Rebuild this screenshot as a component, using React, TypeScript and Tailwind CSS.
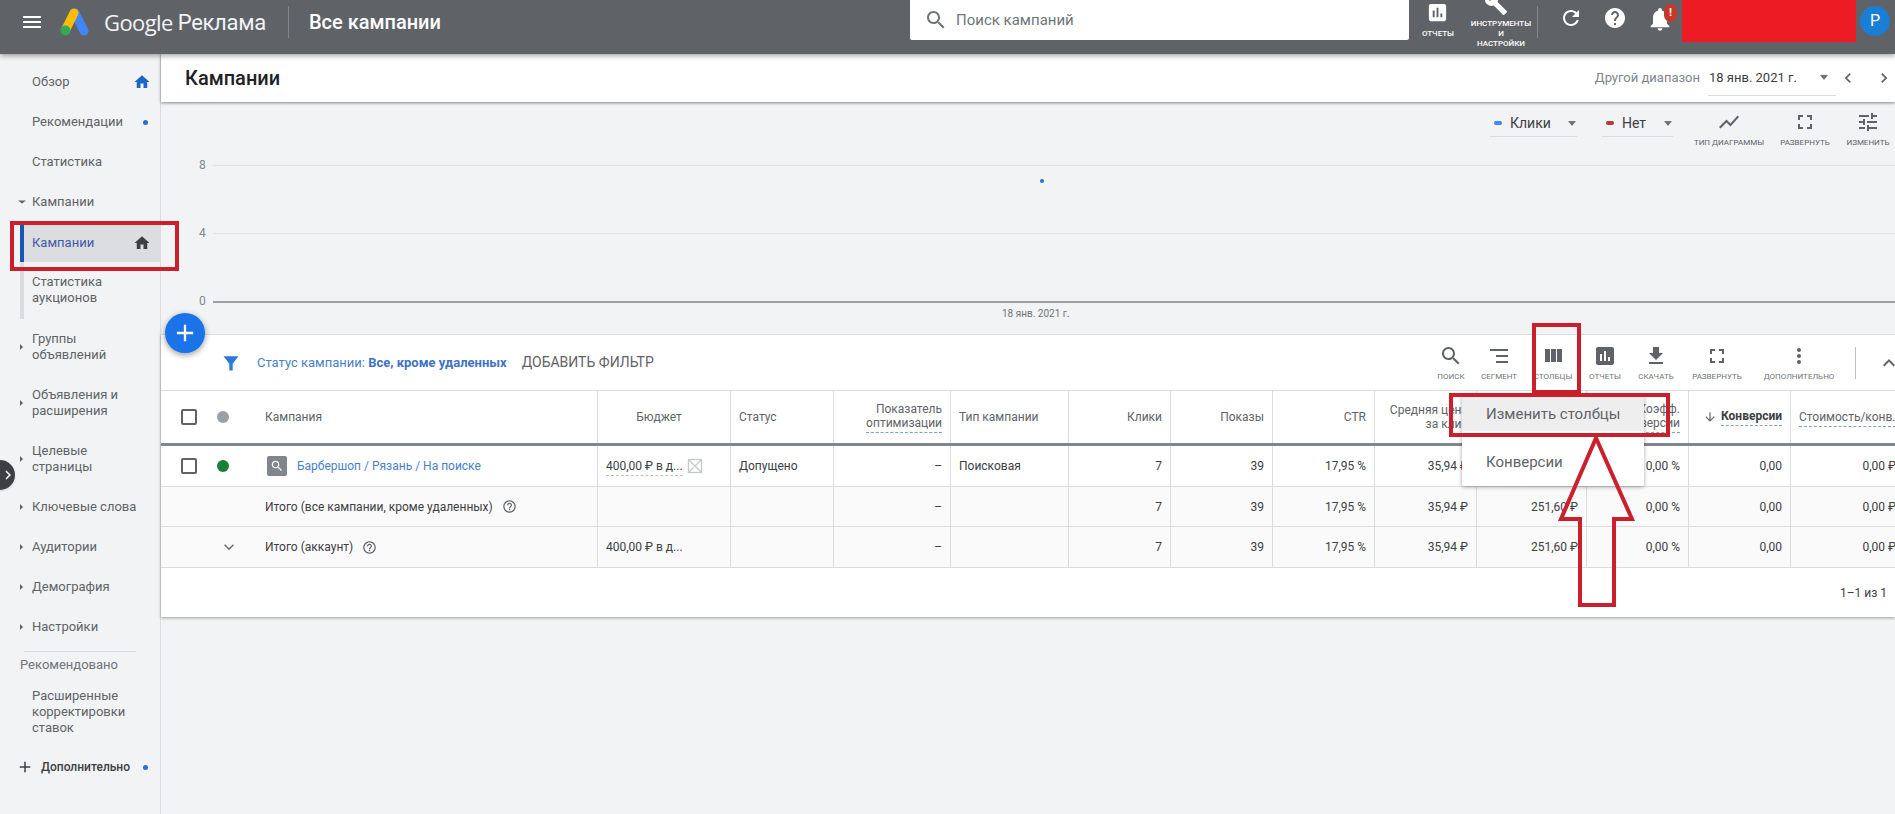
import React from 'react';

type IconProps = { d: string; className?: string };

const Icon = ({ d, className }: IconProps) => (
  <svg viewBox="0 0 24 24" fill="currentColor" className={className}>
    <path d={d} />
  </svg>
);

const paths = {
  menu: 'M3 18h18v-2H3v2zm0-5h18v-2H3v2zm0-7v2h18V6H3z',
  search:
    'M15.5 14h-.79l-.28-.27C15.41 12.59 16 11.11 16 9.5 16 5.91 13.09 3 9.5 3S3 5.91 3 9.5 5.91 16 9.5 16c1.61 0 3.09-.59 4.23-1.57l.27.28v.79l5 4.99L20.49 19l-4.99-5zm-6 0C7.01 14 5 11.99 5 9.5S7.01 5 9.5 5 14 7.01 14 9.5 11.99 14 9.5 14z',
  report:
    'M19 3H5c-1.1 0-2 .9-2 2v14c0 1.1.9 2 2 2h14c1.1 0 2-.9 2-2V5c0-1.1-.9-2-2-2zM9 17H7v-7h2v7zm4 0h-2V7h2v10zm4 0h-2v-4h2v4z',
  wrench:
    'M22.7 19l-9.1-9.1c.9-2.3.4-5-1.5-6.9-2-2-5-2.4-7.4-1.3L9 6 6 9 1.6 4.7C.4 7.1.9 10.1 2.9 12.1c1.9 1.9 4.6 2.4 6.9 1.5l9.1 9.1c.4.4 1 .4 1.4 0l2.3-2.3c.5-.4.5-1.1.1-1.4z',
  refresh:
    'M17.65 6.35C16.2 4.9 14.21 4 12 4c-4.42 0-7.99 3.58-7.99 8s3.57 8 7.99 8c3.73 0 6.84-2.55 7.73-6h-2.08c-.82 2.33-3.04 4-5.65 4-3.31 0-6-2.69-6-6s2.69-6 6-6c1.66 0 3.14.69 4.22 1.78L13 11h7V4l-2.35 2.35z',
  help: 'M12 2C6.48 2 2 6.48 2 12s4.48 10 10 10 10-4.48 10-10S17.52 2 12 2zm1 17h-2v-2h2v2zm2.07-7.75l-.9.92C13.45 12.9 13 13.5 13 15h-2v-.5c0-1.1.45-2.1 1.17-2.83l1.24-1.26c.37-.36.59-.86.59-1.41 0-1.1-.9-2-2-2s-2 .9-2 2H8c0-2.21 1.79-4 4-4s4 1.79 4 4c0 .88-.36 1.68-.93 2.25z',
  helpOutline:
    'M11 18h2v-2h-2v2zm1-16C6.48 2 2 6.48 2 12s4.48 10 10 10 10-4.48 10-10S17.52 2 12 2zm0 18c-4.41 0-8-3.59-8-8s3.59-8 8-8 8 3.59 8 8-3.59 8-8 8zm0-14c-2.21 0-4 1.79-4 4h2c0-1.1.9-2 2-2s2 .9 2 2c0 2-3 1.75-3 5h2c0-2.25 3-2.5 3-5 0-2.21-1.79-4-4-4z',
  bell: 'M12 22c1.1 0 2-.9 2-2h-4c0 1.1.89 2 2 2zm6-6v-5c0-3.07-1.64-5.64-4.5-6.32V4c0-.83-.67-1.5-1.5-1.5s-1.5.67-1.5 1.5v.68C7.63 5.36 6 7.92 6 11v5l-2 2v1h16v-1l-2-2z',
  home: 'M10 20v-6h4v6h5v-8h3L12 3 2 12h3v8z',
  fullscreen: 'M7 14H5v5h5v-2H7v-3zm-2-4h2V7h3V5H5v5zm12 7h-3v2h5v-5h-2v3zM14 5v2h3v3h2V5h-5z',
  tune: 'M3 17v2h6v-2H3zM3 5v2h10V5H3zm10 16v-2h8v-2h-8v-2h-2v6h2zM7 9v2H3v2h4v2h2V9H7zm14 4v-2H11v2h10zm-6-4h2V7h4V5h-4V3h-2v6z',
  chart: 'M3.5 18.49l6-6.01 4 4L22 6.92l-1.41-1.41-7.09 7.97-4-4L2 16.99z',
  segment: 'M3 5h18v2H3V5zm6 6h12v2H9v-2zm0 6h12v2H9v-2z',
  columns: 'M10 18h5V5h-5v13zm-6 0h5V5H4v13zM16 5v13h5V5h-5z',
  download: 'M19 9h-4V3H9v6H5l7 7 7-7zM5 18v2h14v-2H5z',
  more: 'M12 8c1.1 0 2-.9 2-2s-.9-2-2-2-2 .9-2 2 .9 2 2 2zm0 2c-1.1 0-2 .9-2 2s.9 2 2 2 2-.9 2-2-.9-2-2-2zm0 6c-1.1 0-2 .9-2 2s.9 2 2 2 2-.9 2-2-.9-2-2-2z',
  arrowDown: 'M20 12l-1.41-1.41L13 16.17V4h-2v12.17l-5.58-5.59L4 12l8 8 8-8z',
  chevronDown: 'M7.41 8.59L12 13.17l4.59-4.58L18 10l-6 6-6-6z',
  chevronUp: 'M7.41 15.41L12 10.83l4.59 4.58L18 14l-6-6-6 6z',
  chevronLeft: 'M15.41 7.41L14 6l-6 6 6 6 1.41-1.41L10.83 12z',
  chevronRight: 'M10 6L8.59 7.41 13.17 12l-4.58 4.59L10 18l6-6z',
  filter: 'M3 4h18l-7 9v8h-4v-8z',
  plus: 'M19 13h-6v6h-2v-6H5v-2h6V5h2v6h6v2z',
};

const Caret = ({ className }: { className: string }) => (
  <span className={`inline-block ${className}`} />
);

const SideItem = ({
  children,
  tall,
  arrow,
  right,
}: {
  children: React.ReactNode;
  tall?: boolean;
  arrow?: 'right' | 'down';
  right?: React.ReactNode;
}) => (
  <div className={`relative flex items-center pl-8 pr-[9px] text-[13px] leading-4 text-[#5f6368] ${tall ? 'h-14' : 'h-10'}`}>
    {arrow === 'right' && (
      <Caret className="absolute left-[20px] top-1/2 -translate-y-1/2 border-y-[3px] border-l-[3px] border-y-transparent border-l-[#5f6368]" />
    )}
    {arrow === 'down' && (
      <Caret className="absolute left-[18px] top-1/2 -translate-y-1/2 border-x-[4px] border-t-[3px] border-x-transparent border-t-[#5f6368]" />
    )}
    <span className="flex-1">{children}</span>
    {right}
  </div>
);

const Sidebar = () => (
  <aside className="w-[161px] shrink-0 border-r border-[#dadce0] bg-[#f1f3f4] pt-2">
    <SideItem right={<Icon d={paths.home} className="h-[18px] w-[18px] text-[#1a66c9]" />}>Обзор</SideItem>
    <SideItem right={<span className="mr-[3px] h-[5px] w-[5px] rounded-full bg-[#2a6fd0]" />}>Рекомендации</SideItem>
    <SideItem>Статистика</SideItem>
    <SideItem arrow="down">Кампании</SideItem>
    <div className="ml-5 mt-[2px] flex h-[38px] items-center border-l-4 border-[#1a56b8] bg-[#dcdde0] pl-2 pr-[9px] text-[13px] text-[#3f5ba9]">
      <span className="flex-1">Кампании</span>
      <Icon d={paths.home} className="h-[18px] w-[18px] text-[#3c4043]" />
    </div>
    <div className="ml-5 flex h-[57px] items-center border-l-4 border-[#dadce0] pb-[1px] pl-2 text-[13px] leading-4 text-[#5f6368]">
      <span>
        Статистика
        <br />
        аукционов
      </span>
    </div>
    <SideItem tall arrow="right">
      Группы
      <br />
      объявлений
    </SideItem>
    <SideItem tall arrow="right">
      Объявления и
      <br />
      расширения
    </SideItem>
    <SideItem tall arrow="right">
      Целевые
      <br />
      страницы
    </SideItem>
    <SideItem arrow="right">Ключевые слова</SideItem>
    <SideItem arrow="right">Аудитории</SideItem>
    <SideItem arrow="right">Демография</SideItem>
    <SideItem arrow="right">Настройки</SideItem>
    <div className="ml-6 mr-6 mt-1 h-px w-[112px] bg-[#dadce0]" />
    <div className="flex h-[26px] items-center pl-5 text-[13px] text-[#70757a]">Рекомендовано</div>
    <div className="mt-[2px] flex h-16 items-center pl-8 text-[13px] leading-4 text-[#5f6368]">
      <span>
        Расширенные
        <br />
        корректировки
        <br />
        ставок
      </span>
    </div>
    <div className="mt-[3px] flex h-10 items-center pl-4 pr-[9px] text-[12px] font-medium text-[#3c4043]">
      <Icon d={paths.plus} className="h-[18px] w-[18px] text-[#3c4043]" />
      <span className="ml-[7px] flex-1">Дополнительно</span>
      <span className="mr-[3px] h-[5px] w-[5px] rounded-full bg-[#2a6fd0]" />
    </div>
  </aside>
);

const TopBar = () => (
  <header className="relative z-20 flex h-[54px] shrink-0 items-start bg-[#5f6368] text-white shadow-[0_2px_5px_rgba(0,0,0,0.35)]">
    <div className="flex h-[44px] items-center pl-[20px]">
      <Icon d={paths.menu} className="h-6 w-6" />
      <svg viewBox="0 0 30 28" className="ml-[16px] h-[28px] w-[30px]">
        <line x1="15" y1="5" x2="24" y2="23" stroke="#4285f4" strokeWidth="9" strokeLinecap="round" />
        <line x1="14" y1="5" x2="6" y2="21" stroke="#fbbc04" strokeWidth="9" strokeLinecap="round" />
        <circle cx="5.5" cy="22.5" r="5" fill="#34a853" />
      </svg>
      <span className="ml-[14px] font-['Open_Sans',sans-serif] text-[22px] tracking-[-0.6px] text-[#f1f3f4]">Google</span>
      <span className="ml-[5px] text-[22px] tracking-[-0.3px] text-[#f1f3f4]">Реклама</span>
      <div className="ml-[22px] h-8 w-px bg-[#80868b]" />
      <span className="ml-[20px] text-[20px] font-medium">Все кампании</span>
    </div>
    <div className="ml-[469px] flex h-10 w-[499px] items-center rounded-b-[2px] bg-white pl-[14px] text-[#70757a]">
      <Icon d={paths.search} className="h-6 w-6" />
      <span className="ml-[8px] text-[15px]">Поиск кампаний</span>
    </div>
    <div className="ml-[18px] flex w-[22px] flex-col items-center">
      <Icon d={paths.report} className="mt-[1px] h-[23px] w-[23px]" />
      <span className="mt-[5px] whitespace-nowrap text-[8px] font-medium leading-[10px]">ОТЧЕТЫ</span>
    </div>
    <div className="relative ml-[21px] flex w-[62px] flex-col items-center overflow-hidden pt-[19px] text-center text-[8px] font-medium leading-[10px]">
      <Icon d={paths.wrench} className="absolute -top-[8px] left-[14px] h-[24px] w-[24px]" />
      <span>ИНСТРУМЕНТЫ</span>
      <span>И</span>
      <span>НАСТРОЙКИ</span>
    </div>
    <div className="ml-[5px] mt-[6px] h-8 w-px bg-[#80868b]" />
    <Icon d={paths.refresh} className="ml-[21px] mt-[6px] h-6 w-6" />
    <Icon d={paths.help} className="ml-[20px] mt-[6px] h-6 w-6" />
    <div className="relative ml-[19px] mt-[5px] h-7 w-7">
      <Icon d={paths.bell} className="h-7 w-7" />
      <span className="absolute -right-[3px] -top-[1px] flex h-[18px] w-[13px] items-center justify-center rounded-full bg-[#c5392c] text-[11px] font-bold">!</span>
    </div>
    <div className="ml-[8px] h-[42px] w-[174px] bg-[#ed1c24]" />
    <div className="ml-[4px] mt-[6px] flex h-[30px] w-[30px] shrink-0 items-center justify-center rounded-full bg-[#1a7fd4] text-[16px]">P</div>
  </header>
);

const PageTitle = () => (
  <div className="relative z-10 flex h-12 shrink-0 items-center bg-white pl-6 pr-[1px] shadow-[0_1px_3px_rgba(0,0,0,0.45)]">
    <h1 className="flex-1 text-[20px] font-medium leading-none text-[#202124]">Кампании</h1>
    <span className="text-[13px] text-[#80868b]">Другой диапазон</span>
    <div className="ml-[8px] flex h-[36px] w-[128px] items-center justify-between border-b border-[#dadce0] pl-[1px] pr-[8px] text-[13px] text-[#3c4043]">
      <span>18 янв. 2021 г.</span>
      <Caret className="border-x-[4px] border-t-[5px] border-x-transparent border-t-[#70757a]" />
    </div>
    <Icon d={paths.chevronLeft} className="ml-[2px] h-5 w-5 text-[#5f6368]" />
    <Icon d={paths.chevronRight} className="ml-4 h-5 w-5 text-[#5f6368]" />
  </div>
);

const LegendSelect = ({ color, label, width }: { color: string; label: string; width: string }) => (
  <div className={`flex h-[27px] items-center border-b border-[#dadce0] pl-[4px] text-[14px] text-[#3c4043] ${width}`}>
    <span className={`h-[4px] w-[8px] rounded-full ${color}`} />
    <span className="ml-[8px] flex-1">{label}</span>
    <Caret className="mr-[1px] border-x-[4px] border-t-[5px] border-x-transparent border-t-[#70757a]" />
  </div>
);

const ChartAction = ({ d, label, width }: { d: string; label: string; width: string }) => (
  <div className={`flex flex-col items-center ${width}`}>
    <Icon d={d} className="h-6 w-6 text-[#5f6368]" />
    <span className="mt-[4px] whitespace-nowrap text-[8px] leading-[10px] text-[#5f6368]">{label}</span>
  </div>
);

const Chart = () => (
  <section className="relative h-[232px] shrink-0 bg-[#f1f3f4]">
    <div className="flex items-start justify-end pr-[5px] pt-[8px]">
      <LegendSelect color="bg-[#4285f4]" label="Клики" width="w-[87px]" />
      <div className="w-[25px]" />
      <LegendSelect color="bg-[#b23a30]" label="Нет" width="w-[71px]" />
      <ChartAction d={paths.chart} label="ТИП ДИАГРАММЫ" width="ml-[21px] w-[70px]" />
      <ChartAction d={paths.fullscreen} label="РАЗВЕРНУТЬ" width="ml-[17px] w-[48px]" />
      <ChartAction d={paths.tune} label="ИЗМЕНИТЬ" width="ml-[17px] w-[44px]" />
    </div>
    <div className="ml-[38px] mt-[17px]">
      <div className="flex h-[68px] items-start text-[12px] leading-none text-[#80868b]">
        <span className="w-[14px] -translate-y-[6px]">8</span>
        <div className="h-px flex-1 bg-[#e0e2e4]" />
      </div>
      <div className="flex h-[68px] items-start text-[12px] leading-none text-[#80868b]">
        <span className="w-[14px] -translate-y-[6px]">4</span>
        <div className="h-px flex-1 bg-[#e0e2e4]" />
      </div>
      <div className="flex h-[2px] items-start text-[12px] leading-none text-[#80868b]">
        <span className="w-[14px] -translate-y-[6px]">0</span>
        <div className="h-[2px] flex-1 bg-[#9aa0a6]" />
      </div>
      <div className="mt-[3px] pl-[803px] text-[10px] text-[#70757a]">18 янв. 2021 г.</div>
    </div>
    {/* единственная точка на графике */}
    <span className="absolute left-[879px] top-[77px] h-[4px] w-[4px] rounded-full bg-[#2a6fd0]" />
  </section>
);

const ToolAction = ({ d, label, width }: { d: string; label: string; width: string }) => (
  <div className={`flex shrink-0 flex-col items-center ${width}`}>
    <Icon d={d} className="h-[24px] w-[24px] text-[#5f6368]" />
    <span className="mt-[4px] whitespace-nowrap text-[8px] leading-[10px] text-[#70757a]">{label}</span>
  </div>
);

const Toolbar = () => (
  <div className="relative flex h-[56px] items-center border-b border-[#dadce0] pl-[60px] text-[13px]">
    <Icon d={paths.filter} className="h-[20px] w-[20px] text-[#2a7ad8]" />
    <span className="ml-[16px] text-[#4a7fc9]">
      Статус кампании: <b className="font-bold text-[#3f73c4]">Все, кроме удаленных</b>
    </span>
    <span className="ml-[15px] text-[14px] text-[#5f6368]">ДОБАВИТЬ ФИЛЬТР</span>
    <div className="ml-auto flex items-center">
      <ToolAction d={paths.search} label="ПОИСК" width="w-[40px]" />
      <ToolAction d={paths.segment} label="СЕГМЕНТ" width="ml-[8px] w-[40px]" />
      <ToolAction d={paths.columns} label="СТОЛБЦЫ" width="ml-[12px] w-[44px]" />
      <ToolAction d={paths.report} label="ОТЧЕТЫ" width="ml-[10px] w-[40px]" />
      <ToolAction d={paths.download} label="СКАЧАТЬ" width="ml-[10px] w-[42px]" />
      <ToolAction d={paths.fullscreen} label="РАЗВЕРНУТЬ" width="ml-[13px] w-[54px]" />
      <ToolAction d={paths.more} label="ДОПОЛНИТЕЛЬНО" width="ml-[18px] w-[74px]" />
      <div className="ml-[19px] h-8 w-px bg-[#bdc1c6]" />
      <Icon d={paths.chevronUp} className="ml-[21px] mr-[-6px] h-6 w-6 text-[#5f6368]" />
    </div>
  </div>
);

const Checkbox = () => <span className="h-[16px] w-[16px] shrink-0 rounded-[2px] border-2 border-[#5f6368]" />;

const gridCols =
  'grid grid-cols-[436px_133px_103px_117px_118px_102px_102px_102px_102px_110px_102px_102px_114px]';

const Dotted = ({ children, strong }: { children: React.ReactNode; strong?: boolean }) => (
  <span className={`border-b border-dashed border-[#80a5b8] pb-[2px] ${strong ? 'font-bold text-[#3c4043]' : ''}`}>{children}</span>
);

const Th = ({ children, left, center }: { children?: React.ReactNode; left?: boolean; center?: boolean }) => (
  <div
    className={`flex items-center border-l border-[#dadce0] px-2 text-[12px] leading-[14px] text-[#5f6368] ${
      center ? 'justify-center pr-[18px] text-center' : left ? 'justify-start' : 'justify-end text-right'
    }`}
  >
    {children}
  </div>
);

const Td = ({ children, left }: { children?: React.ReactNode; left?: boolean }) => (
  <div
    className={`flex items-center overflow-hidden whitespace-nowrap border-l border-[#dadce0] px-2 text-[12px] text-[#3c4043] ${
      left ? 'justify-start' : 'justify-end'
    }`}
  >
    {children}
  </div>
);

const Metrics = () => (
  <>
    <Td>–</Td>
    <Td left />
    <Td>7</Td>
    <Td>39</Td>
    <Td>17,95 %</Td>
    <Td>35,94 ₽</Td>
    <Td>251,60 ₽</Td>
    <Td>0,00 %</Td>
    <Td>0,00</Td>
    <Td>0,00 ₽</Td>
  </>
);

const Table = () => (
  <div className="overflow-hidden">
    <div className={`${gridCols} h-[55px] border-b-[3px] border-[#80868b]`}>
      <div className="flex items-center pl-[20px] text-[12px] text-[#5f6368]">
        <Checkbox />
        <span className="ml-[20px] h-[12px] w-[12px] rounded-full bg-[#9aa0a6]" />
        <span className="ml-[36px]">Кампания</span>
      </div>
      <Th center>Бюджет</Th>
      <Th left>Статус</Th>
      <Th>
        <span className="border-b border-dashed border-[#80a5b8] pb-[2px]">
          Показатель
          <br />
          оптимизации
        </span>
      </Th>
      <Th left>Тип кампании</Th>
      <Th>Клики</Th>
      <Th>Показы</Th>
      <Th>CTR</Th>
      <Th>
        <span>
          Средняя цена
          <br />
          за клик
        </span>
      </Th>
      <Th>
        <span>
          Стоимость
          <br />
          конв.
        </span>
      </Th>
      <Th>
        <Dotted>
          Коэфф.
          <br />
          конверсии
        </Dotted>
      </Th>
      <Th>
        <Icon d={paths.arrowDown} className="mr-[4px] h-[14px] w-[14px] text-[#5f6368]" />
        <Dotted strong>Конверсии</Dotted>
      </Th>
      <Th left>
        <span className="whitespace-nowrap">
          <Dotted>Стоимость/конв.</Dotted>
        </span>
      </Th>
    </div>

    <div className={`${gridCols} h-[41px] border-b border-[#dadce0]`}>
      <div className="flex items-center pl-[20px] text-[12px]">
        <Checkbox />
        <span className="ml-[20px] h-[12px] w-[12px] rounded-full bg-[#188038]" />
        <span className="ml-[38px] flex h-[20px] w-[20px] items-center justify-center rounded-[2px] bg-[#80868b]">
          <Icon d={paths.search} className="h-[14px] w-[14px] text-white" />
        </span>
        <span className="ml-[10px] text-[#4a7fc9]">Барбершоп / Рязань / На поиске</span>
      </div>
      <Td left>
        <span className="border-b border-dashed border-[#bdc1c6]">400,00 ₽ в д...</span>
        <svg viewBox="0 0 16 16" className="ml-[4px] h-4 w-4 text-[#c4c7cb]" fill="none" stroke="currentColor" strokeWidth="1.3">
          <rect x="1.5" y="1.5" width="13" height="13" />
          <path d="M1.5 1.5l13 13M14.5 1.5l-6 6M1.5 14.5l5-5" />
        </svg>
      </Td>
      <Td left>Допущено</Td>
      <Td>–</Td>
      <Td left>Поисковая</Td>
      <Td>7</Td>
      <Td>39</Td>
      <Td>17,95 %</Td>
      <Td>35,94 ₽</Td>
      <Td>251,60 ₽</Td>
      <Td>0,00 %</Td>
      <Td>0,00</Td>
      <Td>0,00 ₽</Td>
    </div>

    <div className={`${gridCols} h-[40px] border-b border-[#dadce0] bg-[#fafafa]`}>
      <div className="flex items-center pl-[104px] text-[12px] text-[#3c4043]">
        <span>Итого (все кампании, кроме удаленных)</span>
        <Icon d={paths.helpOutline} className="ml-[9px] h-[15px] w-[15px] text-[#5f6368]" />
      </div>
      <Td left />
      <Td left />
      <Metrics />
    </div>

    <div className={`${gridCols} h-[41px] border-b border-[#dadce0] bg-[#fafafa]`}>
      <div className="flex items-center pl-[58px] text-[12px] text-[#3c4043]">
        <Icon d={paths.chevronDown} className="h-5 w-5 text-[#70757a]" />
        <span className="ml-[26px]">Итого (аккаунт)</span>
        <Icon d={paths.helpOutline} className="ml-[9px] h-[15px] w-[15px] text-[#5f6368]" />
      </div>
      <Td left>400,00 ₽ в д...</Td>
      <Td left />
      <Metrics />
    </div>

    <div className="flex h-[49px] items-center justify-end pr-[8px] text-[12px] text-[#3c4043]">1–1 из 1</div>
  </div>
);

export default function App() {
  return (
    <div className="relative flex h-[814px] w-[1895px] flex-col overflow-hidden bg-[#f1f3f4] font-['Roboto',sans-serif]">
      <TopBar />
      <div className="flex flex-1 overflow-hidden">
        <Sidebar />
        <main className="min-w-0 flex-1">
          <PageTitle />
          <Chart />
          <div className="border-t border-[#dadce0] bg-white shadow-[0_1px_3px_rgba(0,0,0,0.35)]">
            <Toolbar />
            <Table />
          </div>
        </main>
      </div>

      {/* кнопка создания */}
      <div className="absolute left-[165px] top-[313px] z-20 flex h-10 w-10 items-center justify-center rounded-full bg-[#1a73e8] text-white shadow-[0_2px_6px_rgba(0,0,0,0.4)]">
        <Icon d={paths.plus} className="h-7 w-7" />
      </div>

      {/* сворачивание боковой панели */}
      <div className="absolute -left-[15px] top-[460px] z-20 flex h-[30px] w-[30px] items-center justify-end rounded-full bg-[#3c4043] text-white shadow">
        <Icon d={paths.chevronRight} className="-mr-[2px] h-[18px] w-[18px]" />
      </div>

      {/* меню столбцов */}
      <div className="absolute left-[1462px] top-[394px] z-20 flex h-[92px] w-[182px] flex-col rounded-[2px] bg-white py-[3px] text-[15px] text-[#5f6368] shadow-[0_1px_4px_rgba(0,0,0,0.35)]">
        <div className="flex h-[34px] items-center bg-[#eeeeee] pl-6">Изменить столбцы</div>
        <div className="flex flex-1 items-center pl-6 pt-[10px]">Конверсии</div>
      </div>

      {/* красные пометки поверх скриншота */}
      <div className="absolute left-[10px] top-[221px] z-30 h-[50px] w-[169px] border-[4px] border-[#c9202c]" />
      <div className="absolute left-[1532px] top-[323px] z-30 h-[71px] w-[49px] border-[4px] border-[#c9202c]" />
      <div className="absolute left-[1449px] top-[393px] z-30 h-[44px] w-[221px] border-[4px] border-[#c9202c]" />
      <svg viewBox="0 0 85 180" className="absolute left-[1554px] top-[432px] z-30 h-[180px] w-[85px]" fill="none" stroke="#c9202c" strokeWidth="4">
        <path d="M42 6 L78 87 H60 V173 H26 V87 H7 Z" />
      </svg>
    </div>
  );
}
